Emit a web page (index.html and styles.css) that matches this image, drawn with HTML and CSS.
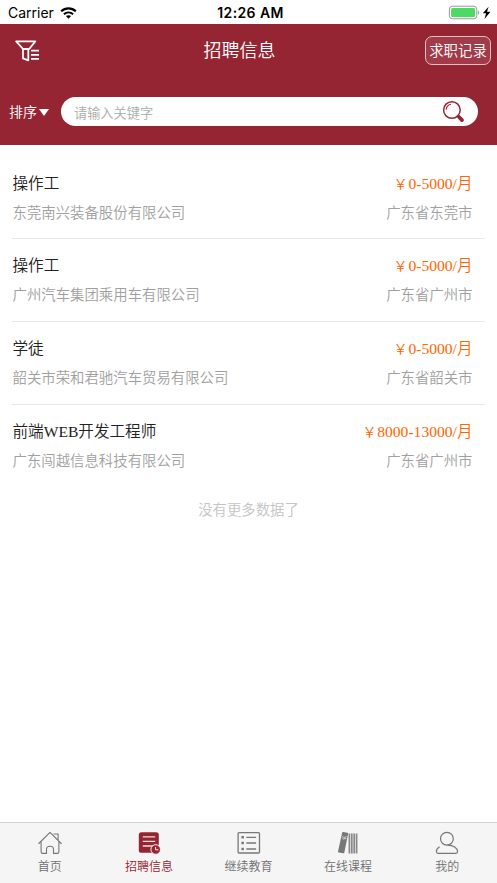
FILE: index.html
```html
<!DOCTYPE html>
<html lang="zh-CN">
<head>
    <meta charset="UTF-8">
    <meta name="viewport" content="width=device-width, initial-scale=1.0">
    <title>招聘信息</title>
    <link rel="stylesheet" href="styles.css">
</head>
<body>
    <div class="app">
        <div class="status-bar">
            <div class="carrier">
                <span>Carrier</span>
                <svg class="wifi" width="17" height="12" viewBox="0 0 17 12">
                    <path d="M1.2 4.3C5.4.4 11.6.4 15.8 4.3" fill="none" stroke="#000" stroke-width="2.2"/>
                    <path d="M3.9 7.2C6.6 4.8 10.4 4.8 13.1 7.2" fill="none" stroke="#000" stroke-width="2"/>
                    <path d="M5.9 9.1C7.4 7.8 9.6 7.8 11.1 9.1L8.5 11.8z"/>
                </svg>
            </div>
            <span class="time">12:26 AM</span>
            <div class="battery">
                <svg width="43" height="15" viewBox="0 0 43 15">
                    <rect x="1.4" y=".2" width="27.4" height="12.6" rx="3" fill="#fff" stroke="#999" stroke-width="1"/>
                    <rect x="3.1" y="1.9" width="24" height="9.2" rx="1.6" fill="#4cd964"/>
                    <path d="M30 4.3v4.6c1.5-.8 1.5-3.8 0-4.6z" fill="#999"/>
                    <path d="M40.6.7L34.8 7.3h3.3l-1.6 5.6 6-7.2h-3.5z"/>
                </svg>
            </div>
        </div>

        <div class="header">
            <div class="nav">
                <svg class="filter" width="26" height="22" viewBox="0 0 26 22" fill="none" stroke="#fff" stroke-width="1.8" stroke-linejoin="round">
                    <path d="M1.2 1.3h19.2L14.2 9H8z"/>
                    <path d="M8 9v9.4l5.3 2V9.2"/>
                    <path d="M16 10.7h8M16 14.8h8M16 18.9h8"/>
                </svg>
                <h1>招聘信息</h1>
                <button class="record">求职记录</button>
            </div>
            <div class="search">
                <div class="sort">排序<span class="arrow"></span></div>
                <div class="search-box">
                    <input type="text" placeholder="请输入关键字">
                    <svg width="23" height="23" viewBox="0 0 23 23" fill="none" stroke="#962534">
                        <circle cx="9.9" cy="10" r="8.3" stroke-width="1.5"/>
                        <path d="M4.2 9.8C4.3 6.8 6.1 4.7 9 4.2" stroke-width="1.1"/>
                        <path d="M15.3 15.5l1.7 1.7" stroke-width="1.8"/>
                        <path d="M17 17l3 3.1" stroke-width="3.8" stroke-linecap="round"/>
                    </svg>
                </div>
            </div>
        </div>

        <div class="list">
            <div class="job">
                <div class="line"><span class="name">操作工</span><span class="price"><span class="yen">￥</span>0-5000/月</span></div>
                <div class="line sub"><span>东莞南兴装备股份有限公司</span><span>广东省东莞市</span></div>
            </div>
            <div class="job">
                <div class="line"><span class="name">操作工</span><span class="price"><span class="yen">￥</span>0-5000/月</span></div>
                <div class="line sub"><span>广州汽车集团乘用车有限公司</span><span>广东省广州市</span></div>
            </div>
            <div class="job">
                <div class="line"><span class="name">学徒</span><span class="price"><span class="yen">￥</span>0-5000/月</span></div>
                <div class="line sub"><span>韶关市荣和君驰汽车贸易有限公司</span><span>广东省韶关市</span></div>
            </div>
            <div class="job">
                <div class="line"><span class="name">前端WEB开发工程师</span><span class="price"><span class="yen">￥</span>8000-13000/月</span></div>
                <div class="line sub"><span>广东闯越信息科技有限公司</span><span>广东省广州市</span></div>
            </div>
            <div class="no-more">没有更多数据了</div>
        </div>

        <div class="tabs">
            <div class="tab">
                <svg width="24" height="24" viewBox="0 0 24 24" fill="none" stroke="#777" stroke-width="1.1" stroke-linejoin="round" stroke-linecap="round">
                    <path d="M.8 12.5L12 1.3l11.2 11.2M16 3h4.1v5.7"/>
                    <path d="M3.1 11v9.7c0 1 .6 1.7 1.6 1.7h3.8v-4.2c0-4 7-4 7 0v4.2h3.8c1 0 1.6-.7 1.6-1.7V11"/>
                </svg>
                <span>首页</span>
            </div>
            <div class="tab active">
                <svg width="24" height="24" viewBox="0 0 24 24">
                    <rect x="1.8" y="1.2" width="20" height="20.6" rx="2.6" fill="#962534"/>
                    <path d="M5.8 5.8h12.4M5.8 10.4h12.4M5.8 15h12.4" stroke="#f0dfe1" stroke-width="1.3"/>
                    <circle cx="18.7" cy="18.5" r="4.8" fill="#962534" stroke="#f5f5f5" stroke-width="1"/>
                    <path d="M18.6 16v2.8h2.8" fill="none" stroke="#f5f5f5" stroke-width="1"/>
                </svg>
                <span>招聘信息</span>
            </div>
            <div class="tab">
                <svg width="24" height="24" viewBox="0 0 24 24" fill="none" stroke="#777" stroke-width="1.3">
                    <rect x="1.1" y="1.6" width="21.4" height="20.4" rx="1"/>
                    <path d="M9.3 6.3h9.8M9.3 12h9.8M9.3 18h9.8"/>
                    <path d="M4.4 6.3h2.5M4.4 12h2.5M4.4 18h2.5" stroke-width="2.4"/>
                </svg>
                <span>继续教育</span>
            </div>
            <div class="tab">
                <svg width="24" height="24" viewBox="0 0 24 24">
                    <path d="M7.2 1l4.2.8c.5.1.8.5.7 1L8.3 21.7c-.1.5-.5.7-1 .6l-4.6-.8c-.5-.1-.8-.5-.7-1L6.2 1.6c.1-.5.5-.7 1-.6z" fill="#777"/>
                    <path d="M6.2 4.8l1.6 1.8 2.8-.9M5.9 6.8l1.5 1.3 2.9-.7" fill="none" stroke="#ddd" stroke-width=".9"/>
                    <path d="M13.4 2.6v20M15.8 2.6v20M18.2 2.6v20M20.6 2.6v20" stroke="#888" stroke-width="1.7"/>
                </svg>
                <span>在线课程</span>
            </div>
            <div class="tab">
                <svg width="24" height="24" viewBox="0 0 24 24" fill="none" stroke="#777" stroke-width="1.2" stroke-linecap="round">
                    <circle cx="11.9" cy="7.7" r="6.4"/>
                    <path d="M4.3 16.1c-1.8 1-2.9 2.8-2.9 4.5 0 1.1.6 1.8 1.7 1.8h17.8c1.1 0 1.7-.7 1.7-1.8 0-3.8-4.5-6.5-9.7-6.5"/>
                </svg>
                <span>我的</span>
            </div>
        </div>
    </div>
</body>
</html>
```
FILE: styles.css
```css
* {
    box-sizing: border-box;
}
body {
    margin: 0;
    background-color: #fff;
    font-family: "Liberation Serif", "Noto Sans CJK SC", serif;
    font-weight: 350;
}
.app {
    display: flex;
    flex-direction: column;
    height: 100vh;
    overflow: hidden;
}
.status-bar {
    display: grid;
    grid-template-columns: 1fr auto 1fr;
    align-items: center;
    height: 24px;
    padding: 2px 6px 0 8px;
    font-family: Inter, sans-serif;
    font-size: 14px;
    font-weight: 400;
    line-height: 22px;
}
.carrier {
    display: flex;
    align-items: center;
    gap: 6px;
}
.time {
    font-weight: 600;
    letter-spacing: 0.4px;
    padding-left: 2px;
}
.battery {
    display: flex;
    justify-content: flex-end;
}
.battery svg {
    overflow: visible;
}
/* Header */
.header {
    height: 121px;
    background-color: #962534;
    color: #fff;
}
.nav {
    display: grid;
    grid-template-columns: 1fr auto 1fr;
    align-items: center;
    height: 53px;
    padding: 0 6px 0 15px;
}
.nav h1 {
    margin: 0;
    padding-right: 27px;
    font-size: 18px;
    font-weight: 350;
    line-height: 26px;
}
.record {
    justify-self: end;
    width: 66px;
    height: 29px;
    padding: 0;
    border: 1px solid #e0bfc3;
    border-radius: 7px;
    background-color: #a13b49;
    color: #fff;
    font-family: inherit;
    font-size: 14.4px;
    font-weight: 350;
    line-height: 26px;
}
.search {
    display: flex;
    align-items: center;
    height: 29px;
    margin-top: 20px;
    padding: 0 19px 0 9px;
}
.sort {
    display: flex;
    align-items: center;
    width: 52px;
    padding-bottom: 1px;
    font-size: 14px;
}
.arrow {
    margin: 2px 0 0 2px;
    border: 5.5px solid transparent;
    border-top: 7px solid #fff;
    border-bottom: none;
}
.search-box {
    display: flex;
    align-items: center;
    flex: 1;
    height: 29px;
    padding: 0 13px 0 13px;
    border-radius: 15px;
    background-color: #fff;
}
.search-box input {
    flex: 1;
    min-width: 0;
    padding: 4px 0 0;
    border: none;
    background: none;
    font-family: inherit;
    font-size: 13.2px;
    font-weight: 350;
}
.search-box input::placeholder {
    color: #aaa;
}
/* Job list */
.list {
    flex: 1;
    padding: 11.6px 12px 0;
}
.job {
    height: 82.8px;
    padding: 12px 12.5px 0 0.5px;
    border-bottom: 1px solid #e8e8e8;
}
.job:nth-child(4) {
    border-bottom: none;
}
.line {
    display: flex;
    justify-content: space-between;
    height: 29px;
    line-height: 29px;
    font-size: 15.6px;
}
.name {
    color: #222;
}
.price {
    color: #f60;
}
.yen {
    display: inline-block;
    width: 15.6px;
    font-size: 14px;
    text-align: center;
}
.sub {
    color: #a0a0a0;
    font-size: 14.4px;
    line-height: 31px;
}
.no-more {
    padding-top: 8px;
    color: #c4c4c4;
    font-size: 14.4px;
    line-height: 29px;
    text-align: center;
}
/* Bottom tabs */
.tabs {
    display: flex;
    height: 61px;
    border-top: 1px solid #d3d3d3;
    background-color: #f5f5f5;
}
.tab {
    display: flex;
    flex: 1;
    flex-direction: column;
    align-items: center;
    padding-top: 8px;
    color: #707070;
    font-size: 12px;
    line-height: 24px;
}
.tab.active {
    color: #962534;
}
```
